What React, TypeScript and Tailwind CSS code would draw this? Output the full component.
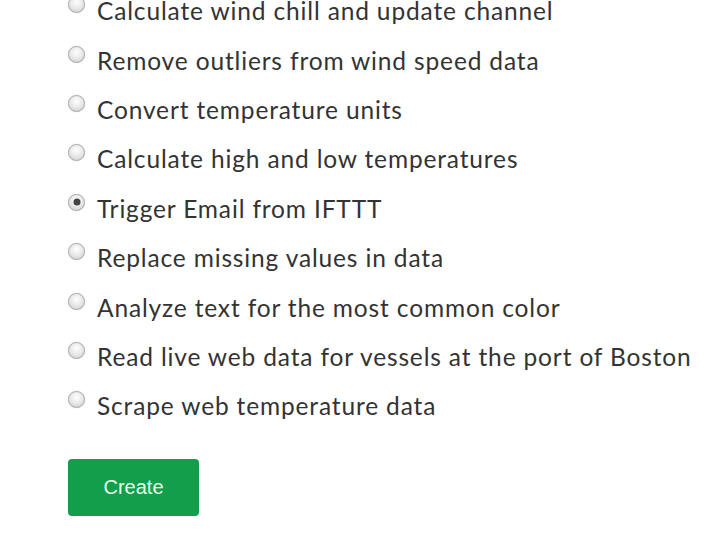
import React from "react";

const items = [
  "Calculate wind chill and update channel",
  "Remove outliers from wind speed data",
  "Convert temperature units",
  "Calculate high and low temperatures",
  "Trigger Email from IFTTT",
  "Replace missing values in data",
  "Analyze text for the most common color",
  "Read live web data for vessels at the port of Boston",
  "Scrape web temperature data",
];

function Radio({ checked }: { checked: boolean }) {
  return (
    <span className="relative mt-[-14px] mr-[12px] inline-block h-[17px] w-[17px] shrink-0 rounded-full border border-[#a9a9a9] bg-[radial-gradient(circle_at_50%_35%,#ffffff_0%,#e6e6e6_55%,#c8c8c8_100%)] shadow-[0_0_1px_#bbb]">
      {checked && (
        <span className="absolute left-1/2 top-1/2 h-[7px] w-[7px] -translate-x-1/2 -translate-y-1/2 rounded-full bg-[#444]" />
      )}
    </span>
  );
}

export default function App() {
  return (
    <div className="h-[555px] w-[728px] overflow-hidden bg-white pl-[68px] font-['Lato','Noto_Sans',sans-serif] text-[#333]">
      <div className="mt-[-13px] flex flex-col">
        {items.map((t, i) => (
          <label key={i} className="flex h-[49.4px] items-center text-[24.5px] tracking-[0.85px]">
            <Radio checked={i === 4} />
            <span>{t}</span>
          </label>
        ))}
      </div>
      <button className="mt-[27px] h-[57px] w-[131px] rounded-[4px] bg-[#139e4c] font-['Liberation_Sans',Arial,sans-serif] text-[20px] text-[#e6ffe9]">
        Create
      </button>
    </div>
  );
}
